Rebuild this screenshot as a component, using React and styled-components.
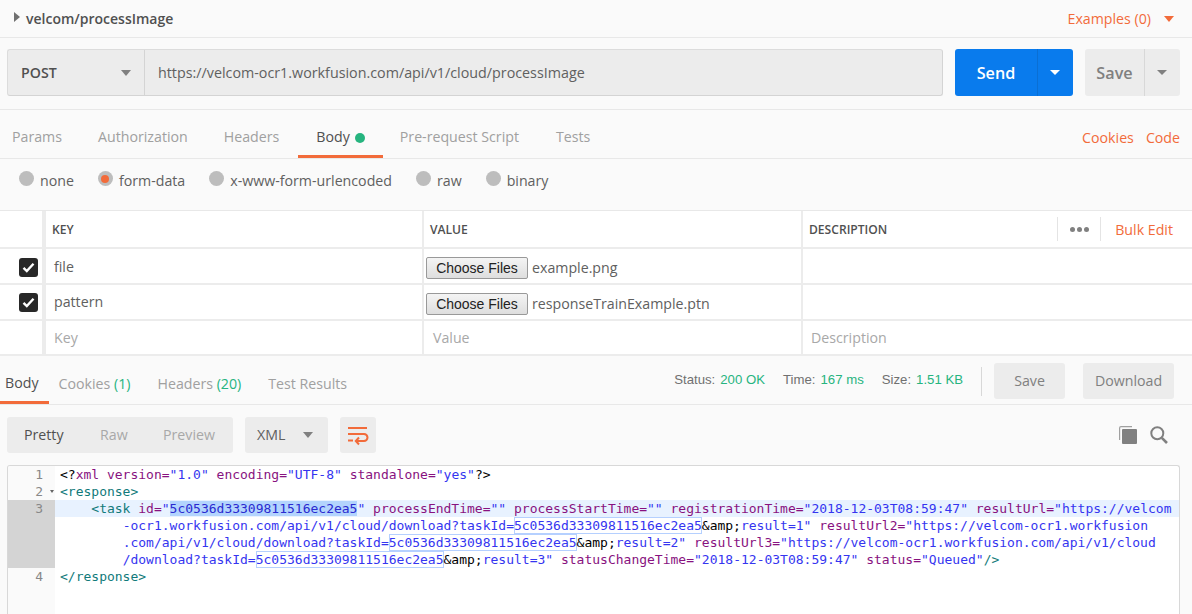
import React from 'react';
import styled, { createGlobalStyle } from 'styled-components';

const Global = createGlobalStyle`
  html, body { margin: 0; padding: 0; background: #fafafa; }
  body { font-family: "Open Sans", "Noto Sans", sans-serif; font-size: 14px; color: #505050; }
`;
const orange = '#f26b3a';
const Page = styled.div`width: 1192px; height: 614px; overflow: hidden; background: #fafafa;`;
const Caret = styled.span`
  display: inline-block; width: 0; height: 0;
  border-left: ${p => p.$w || 5}px solid transparent;
  border-right: ${p => p.$w || 5}px solid transparent;
  border-top: ${p => p.$h || 6}px solid ${p => p.$c || '#808080'};
`;
const SideCaret = styled.span`
  display: inline-block; width: 0; height: 0; margin-right: 6px; margin-top: -4px;
  border-top: 5px solid transparent; border-bottom: 5px solid transparent; border-left: 6px solid #707070;
`;
const TopBar = styled.div`
  height: 37px; border-bottom: 1px solid #e8e8e8; display: flex; align-items: center;
  justify-content: space-between; padding: 0 18px 0 14px; box-sizing: content-box;
`;
const Title = styled.div`font-size: 14px; font-weight: 600; color: #505050; display: flex; align-items: center;`;
const Examples = styled.div`font-size: 14.2px; color: ${orange}; display: flex; align-items: center; gap: 13px;`;
const UrlRow = styled.div`
  display: flex; height: 47px; padding: 11px 12px 13px 7px; border-bottom: 1px solid #e8e8e8;
`;
const UrlBox = styled.div`
  width: 936px; box-sizing: border-box; display: flex; border: 1px solid #d4d4d4; border-radius: 3px; background: #ececec;
  border-top-color: #dcdcdc; border-left-color: #dcdcdc;
`;
const Method = styled.div`
  width: 137px; flex: none; box-sizing: border-box; border-right: 1px solid #d4d4d4; padding: 0 13px 0 13px; display: flex;
  justify-content: space-between; align-items: center; font-size: 14.2px; font-weight: 600; color: #505050;
`;
const UrlText = styled.div`padding-left: 13px; display: flex; align-items: center; font-size: 14.3px; color: #606060;`;
const SendGroup = styled.div`
  margin-left: 12px; width: 118px; display: flex; border-radius: 3px; background: #097bed; color: #fff;
  font-size: 16.2px; font-weight: 600; align-items: stretch;
`;
const SaveGroup = styled(SendGroup)`background: #ececec; color: #808080; width: 95px;`;
const MainPart = styled.div`flex: 1; display: flex; align-items: center; justify-content: center;`;
const SplitPart = styled.div`
  width: ${p => p.$w}px; flex: none; display: flex; align-items: center; justify-content: center;
  border-left: 1px solid ${p => p.$line}; padding-right: 2px; box-sizing: border-box;
`;
const TabsRow = styled.div`
  height: 48px; border-bottom: 1px solid #e8e8e8; display: flex; justify-content: space-between; padding: 0 12px 0 0;
`;
const Tabs = styled.div`display: flex; margin-left: ${p => p.$offset || 0}px;`;
const Tab = styled.div`
  height: 100%; box-sizing: border-box; padding: ${p => p.$pad || '8px 18px 0'}; display: flex; align-items: center; gap: 5px;
  font-size: 14.2px; color: ${p => p.$active ? '#505050' : '#a0a0a0'};
  border-bottom: 3px solid ${p => p.$active ? orange : 'transparent'};
`;
const Dot = styled.span`width: 10px; height: 10px; border-radius: 50%; background: #26b47f; margin-top: 2px;`;
const Count = styled.span`color: #26b47f;`;
const LinkGroup = styled.div`display: flex; gap: 12px; align-items: center; padding-top: 7px; color: ${orange}; font-size: 14.2px;`;
const RadioRow = styled.div`height: 51px; padding: 0 0 8px 19px; display: flex; align-items: center; box-sizing: border-box; background: #fafafa;`;
const RadioItem = styled.div`
  display: flex; align-items: center; gap: 6px; margin-right: ${p => p.$mr}px; font-size: 14.2px; color: #606060;
`;
const Radio = styled.span`
  width: 15px; height: 15px; border-radius: 50%; background: #bdbdbd; position: relative; top: -2px; display: flex; align-items: center; justify-content: center;
  &::after { content: ""; width: 8px; height: 8px; border-radius: 50%; background: ${p => p.$on ? orange : 'transparent'}; }
`;
const Table = styled.div`border-top: 1px solid #e8e8e8; background: #fff;`;
const Row = styled.div`
  display: grid; grid-template-columns: 42px 4px 376px 2px 377px 2px 1fr; height: ${p => p.$h}px;
  border-bottom: 2px solid #ececec; box-sizing: content-box; align-items: stretch;
`;
const Sep = styled.div`background: #ececec;`;
const CheckCell = styled.div`display: flex; align-items: center; justify-content: flex-start; padding-left: 19px; padding-top: ${p => p.$pt || 0}px;`;
const Check = styled.span`
  width: 19px; height: 19px; border-radius: 3px; background: #282828; display: flex; align-items: center; justify-content: center;
`;
const HeadCell = styled.div`
  padding-left: ${p => p.$pl}px; font-size: 12.1px; font-weight: 600; color: #505050; display: flex; align-items: center;
`;
const Cell = styled.div`
  padding: ${p => p.$pt || 0}px 0 ${p => p.$pb || 0}px ${p => p.$pl}px; font-size: 14.2px; color: ${p => p.$ph ? '#a8a8a8' : '#606060'}; display: flex; align-items: center; gap: 4px;
`;
const FileName = styled.span`margin-top: -2px;`;
const FileBtn = styled.button`
  height: 22px; width: 102px; padding: 0; font-family: "Liberation Sans", Arial, sans-serif; font-size: 14px; color: #222;
  border: 1px solid #999; border-radius: 2px; background: linear-gradient(#f4f4f4, #dedede);
`;
const DescHead = styled.div`display: flex; align-items: center; padding-left: 6px; justify-content: space-between;`;
const HeadActions = styled.div`display: flex; align-items: center; height: 24px; margin-right: 19px;`;
const Dots = styled.div`
  border-left: 1px solid #e4e4e4; border-right: 1px solid #e4e4e4; height: 24px; width: 42px; display: flex; align-items: center; justify-content: center; gap: 2px;
  span { width: 5px; height: 5px; border-radius: 50%; background: #808080; }
`;
const Bulk = styled.div`color: ${orange}; font-size: 14.2px; margin-left: 14px;`;
const RespBar = styled.div`
  height: 48px; border-bottom: 1px solid #e8e8e8; display: flex; justify-content: space-between; background: #fafafa;
`;
const Metrics = styled.div`display: flex; align-items: center; padding: 2px 18px 0 0;`;
const Metric = styled.div`
  font-family: "Liberation Sans", Arial, sans-serif; font-size: 13.2px; color: #707070; margin: -3px 18px 0 0; white-space: nowrap;
  b { font-weight: 400; color: #26b47f; margin-left: 5px; }
  &:last-of-type { margin-right: 19px; }
`;
const VLine = styled.div`width: 1px; height: 29px; background: #d8d8d8; margin: 0 12px 0 0;`;
const GrayBtn = styled.div`
  height: 36px; box-sizing: border-box; padding-bottom: 2px; border-radius: 3px; background: #ececec; color: #808080; display: flex; align-items: center; justify-content: center;
  font-size: 14.2px; width: ${p => p.$w}px; margin-left: ${p => p.$ml || 0}px;
`;
const ToolRow = styled.div`display: flex; align-items: center; height: 36px; padding: 12px 24px 12px 7px; justify-content: space-between;`;
const ToolLeft = styled.div`display: flex; gap: 12px;`;
const Seg = styled.div`
  height: 36px; width: 226px; border-radius: 3px; background: #ececec; display: flex; align-items: center; font-size: 14.2px; color: #a8a8a8; padding: 0 0 1px 17px; box-sizing: border-box;
`;
const SegItem = styled.span`color: ${p => p.$active ? '#505050' : '#a8a8a8'}; width: ${p => p.$w}px;`;
const Format = styled.div`
  height: 36px; width: 83px; box-sizing: border-box; border-radius: 3px; background: #ececec; display: flex; align-items: center; justify-content: space-between; padding: 0 15px 1px 12px; font-size: 14.2px; color: #606060;
`;
const WrapBtn = styled.div`height: 36px; width: 36px; border-radius: 3px; background: #ececec; display: flex; align-items: center; justify-content: center;`;
const ToolRight = styled.div`display: flex; gap: 13px; align-items: center;`;
const Editor = styled.div`
  margin-left: 7px; width: 1173px; height: 149px; box-sizing: border-box; border: 1px solid #d8d8d8; border-bottom: none; border-radius: 3px 3px 0 0; background: #fff;
  display: grid; grid-template-columns: 47px 1fr; overflow: hidden;
  font-family: "DejaVu Sans Mono", monospace; font-size: 13px; line-height: 17px;
`;
const Gutter = styled.div`background: #fafafa; color: #888;`;
const GutterLine = styled.div`
  height: ${p => (p.$n || 1) * 17}px; background: ${p => p.$hl ? '#d4d4d4' : 'transparent'}; text-align: right; box-sizing: border-box; position: relative; padding-right: 8px; width: 47px;
  i { position: absolute; right: 1px; top: 7px; width: 0; height: 0; border-left: 2.5px solid transparent; border-right: 2.5px solid transparent; border-top: 3px solid #666; }
`;
const GutterNum = styled.span`margin-right: 4px;`;
const Code = styled.div`padding-left: 5px; white-space: pre; color: #000;`;
const CodeLine = styled.div`height: 17px; margin-left: -5px; padding-left: 5px; background: ${p => p.$hl ? '#e8f2ff' : 'transparent'};`;
const T = styled.span`color: #117a7a;`;
const A = styled.span`color: #881280;`;
const V = styled.span`color: #3535f0;`;
const Sel = styled.span`background: #b3d4fd; color: #2a2ad0;`;
const Hit = styled.span`outline: 1px solid #b5d0ff; outline-offset: -1px; color: #3535f0; display: inline-block; height: 17px; box-sizing: border-box;`;

const ID = '5c0536d33309811516ec2ea5';
const Chk = () => (
  <Check><svg width="13" height="11" viewBox="0 0 13 11"><path d="M1.5 5.8 L4.8 9 L11.5 1.8" fill="none" stroke="#fff" strokeWidth="2.4" /></svg></Check>
);

export default function App() {
  return (
    <Page>
      <Global />
      <TopBar>
        <Title><SideCaret />velcom/processImage</Title>
        <Examples>Examples (0)<Caret $c={orange} $w={5} $h={6} /></Examples>
      </TopBar>
      <UrlRow>
        <UrlBox>
          <Method>POST<Caret $w={5} $h={6} /></Method>
          <UrlText>https://velcom-ocr1.workfusion.com/api/v1/cloud/processImage</UrlText>
        </UrlBox>
        <SendGroup><MainPart>Send</MainPart><SplitPart $w={36} $line="#0a6fd4"><Caret $c="#fff" $w={5} $h={5} /></SplitPart></SendGroup>
        <SaveGroup><MainPart>Save</MainPart><SplitPart $w={36} $line="#d8d8d8"><Caret $w={5} $h={5} /></SplitPart></SaveGroup>
      </UrlRow>
      <TabsRow>
        <Tabs $offset={-6}>
          <Tab>Params</Tab><Tab>Authorization</Tab><Tab $pad="8px 19px 0 18px">Headers</Tab>
          <Tab $active $pad="8px 18px 0 18px">Body<Dot /></Tab>
          <Tab $pad="8px 19px 0 17px">Pre-request Script</Tab><Tab>Tests</Tab>
        </Tabs>
        <LinkGroup><span>Cookies</span><span>Code</span></LinkGroup>
      </TabsRow>
      <RadioRow>
        <RadioItem $mr={24}><Radio />none</RadioItem>
        <RadioItem $mr={24}><Radio $on />form-data</RadioItem>
        <RadioItem $mr={24}><Radio />x-www-form-urlencoded</RadioItem>
        <RadioItem $mr={24}><Radio />raw</RadioItem>
        <RadioItem $mr={0}><Radio />binary</RadioItem>
      </RadioRow>
      <Table>
        <Row $h={36}>
          <CheckCell /><Sep />
          <HeadCell $pl={6}>KEY</HeadCell><Sep />
          <HeadCell $pl={6}>VALUE</HeadCell><Sep />
          <DescHead><HeadCell $pl={0}>DESCRIPTION</HeadCell>
            <HeadActions><Dots><span /><span /><span /></Dots><Bulk>Bulk Edit</Bulk></HeadActions>
          </DescHead>
        </Row>
        <Row $h={34}>
          <CheckCell $pt={2}><Chk /></CheckCell><Sep />
          <Cell $pl={8}>file</Cell><Sep />
          <Cell $pl={2} $pt={4}><FileBtn>Choose Files</FileBtn><FileName>example.png</FileName></Cell><Sep />
          <Cell $pl={8} />
        </Row>
        <Row $h={34}>
          <CheckCell><Chk /></CheckCell><Sep />
          <Cell $pl={8} $pb={1}>pattern</Cell><Sep />
          <Cell $pl={2} $pt={4}><FileBtn>Choose Files</FileBtn><FileName>responseTrainExample.ptn</FileName></Cell><Sep />
          <Cell $pl={8} />
        </Row>
        <Row $h={33}>
          <CheckCell /><Sep />
          <Cell $pl={8} $ph>Key</Cell><Sep />
          <Cell $pl={9} $ph>Value</Cell><Sep />
          <Cell $pl={8} $ph>Description</Cell>
        </Row>
      </Table>
      <RespBar>
        <Tabs $offset={-13}>
          <Tab $active $pad="8px 10px 0 18px">Body</Tab>
          <Tab $pad="10px 13px 0 10px"><span>Cookies <Count>(1)</Count></span></Tab>
          <Tab $pad="10px 13px 0 14px"><span>Headers <Count>(20)</Count></span></Tab>
          <Tab $pad="10px 13px 0 14px">Test Results</Tab>
        </Tabs>
        <Metrics>
          <Metric>Status:<b>200 OK</b></Metric>
          <Metric>Time:<b>167 ms</b></Metric>
          <Metric>Size:<b>1.51 KB</b></Metric>
          <VLine />
          <GrayBtn $w={71}>Save</GrayBtn>
          <GrayBtn $w={91} $ml={18}>Download</GrayBtn>
        </Metrics>
      </RespBar>
      <ToolRow>
        <ToolLeft>
          <Seg><SegItem $active $w={76}>Pretty</SegItem><SegItem $w={63}>Raw</SegItem><SegItem>Preview</SegItem></Seg>
          <Format>XML<Caret $w={5} $h={6} /></Format>
          <WrapBtn>
            <svg width="22" height="22" viewBox="0 0 22 22" fill="none" stroke={orange} strokeWidth="2">
              <path d="M1 4 H20" />
              <path d="M1 10 H17 a3.4 3.4 0 0 1 0 7 H9" />
              <path d="M1 16.5 H6" />
              <path d="M12 13.5 L8.8 17 L12 20.5" />
            </svg>
          </WrapBtn>
        </ToolLeft>
        <ToolRight>
          <svg width="18" height="18" viewBox="0 0 18 18">
            <path d="M0 2 a2 2 0 0 1 2 -2 H13 V1.2 H2 a0.8 .8 0 0 0 -.8 .8 V14 H0 Z" fill="#a0a0a0" />
            <rect x="3" y="3" width="15" height="15" rx="1" fill="#808080" />
          </svg>
          <svg width="18" height="18" viewBox="0 0 18 18" fill="none" stroke="#808080">
            <circle cx="7.3" cy="7.3" r="6" strokeWidth="2" />
            <path d="M11.8 11.8 L17 17" strokeWidth="2.6" />
          </svg>
        </ToolRight>
      </ToolRow>
      <Editor>
        <Gutter>
          <GutterLine><GutterNum>1</GutterNum></GutterLine>
          <GutterLine><GutterNum>2</GutterNum><i /></GutterLine>
          <GutterLine $hl $n={4}><GutterNum>3</GutterNum></GutterLine>
          <GutterLine><GutterNum>4</GutterNum></GutterLine>
        </Gutter>
        <Code>
          <CodeLine>{'<?'}<A>xml</A> <A>version=</A><V>"1.0"</V> <A>encoding=</A><V>"UTF-8"</V> <A>standalone=</A><V>"yes"</V>{'?>'}</CodeLine>
          <CodeLine><T>{'<response>'}</T></CodeLine>
          <CodeLine $hl>{'    '}<T>{'<task'}</T> <A>id=</A><V>"</V><Sel>{ID}</Sel><V>"</V> <A>processEndTime=</A><V>""</V> <A>processStartTime=</A><V>""</V> <A>registrationTime=</A><V>"2018-12-03T08:59:47"</V> <A>resultUrl=</A><V>"https://velcom</V></CodeLine>
          <CodeLine>{'        '}<V>-ocr1.workfusion.com/api/v1/cloud/download?taskId=</V><Hit>{ID}</Hit>&amp;amp;<V>result=1"</V> <A>resultUrl2=</A><V>"https://velcom-ocr1.workfusion</V></CodeLine>
          <CodeLine>{'        '}<V>.com/api/v1/cloud/download?taskId=</V><Hit>{ID}</Hit>&amp;amp;<V>result=2"</V> <A>resultUrl3=</A><V>"https://velcom-ocr1.workfusion.com/api/v1/cloud</V></CodeLine>
          <CodeLine>{'        '}<V>/download?taskId=</V><Hit>{ID}</Hit>&amp;amp;<V>result=3"</V> <A>statusChangeTime=</A><V>"2018-12-03T08:59:47"</V> <A>status=</A><V>"Queued"</V><T>{'/>'}</T></CodeLine>
          <CodeLine><T>{'</response>'}</T></CodeLine>
        </Code>
      </Editor>
    </Page>
  );
}
